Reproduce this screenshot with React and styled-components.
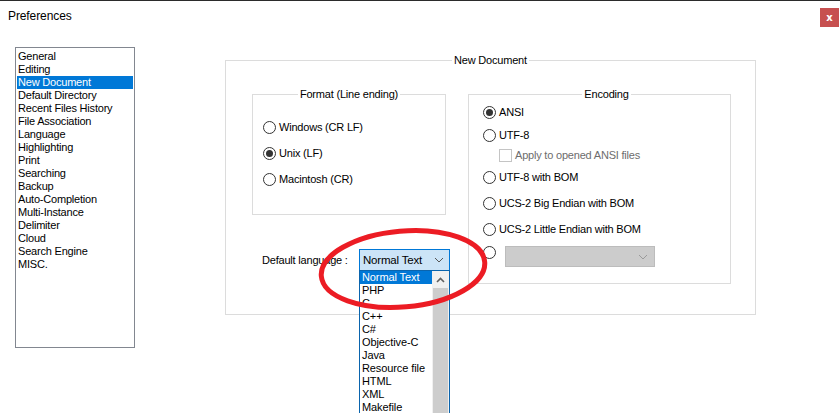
import React from 'react';
import styled, { createGlobalStyle } from 'styled-components';

const GlobalStyle = createGlobalStyle`
  html, body {
    margin: 0;
    padding: 0;
    background: #ffffff;
  }
  body {
    font-family: "Liberation Sans", Arial, sans-serif;
    font-size: 11px;
    color: #000;
  }
`;

const categories = [
  'General', 'Editing', 'New Document', 'Default Directory', 'Recent Files History',
  'File Association', 'Language', 'Highlighting', 'Print', 'Searching', 'Backup',
  'Auto-Completion', 'Multi-Instance', 'Delimiter', 'Cloud', 'Search Engine', 'MISC.'
];

const languages = [
  'Normal Text', 'PHP', 'C', 'C++', 'C#', 'Objective-C', 'Java', 'Resource file',
  'HTML', 'XML', 'Makefile'
];

export default function App() {
  return (
    <Page>
      <GlobalStyle />
      <TopLine />
      <TitleBar>
        <Title>Preferences</Title>
        <CloseButton>x</CloseButton>
      </TitleBar>
      <Main>
        <CategoryList>
          {categories.map(c => (
            <CategoryItem key={c} $selected={c === 'New Document'}>{c}</CategoryItem>
          ))}
        </CategoryList>
        <DocGroup>
          <Legend>New Document</Legend>
          <GroupRow>
            <LeftColumn>
              <FormatGroup>
                <Legend>Format (Line ending)</Legend>
                <FormatOptions>
                  <Option><Radio /><span>Windows (CR LF)</span></Option>
                  <Option><Radio $checked /><span>Unix (LF)</span></Option>
                  <Option><Radio /><span>Macintosh (CR)</span></Option>
                </FormatOptions>
              </FormatGroup>
              <LanguageRow>
                <LangLabel>Default language :</LangLabel>
                <ComboWrap>
                  <LangCombo>
                    <span>Normal Text</span>
                    <Chevron color="#555" />
                  </LangCombo>
                  <DropList>
                    <DropItems>
                      {languages.map(l => (
                        <DropItem key={l} $selected={l === 'Normal Text'}>{l}</DropItem>
                      ))}
                    </DropItems>
                    <ScrollBar>
                      <ScrollArrow>
                        <svg width="9" height="6" viewBox="0 0 9 6">
                          <path d="M1 5 L4.5 1.5 L8 5" fill="none" stroke="#606060" strokeWidth="1.6" />
                        </svg>
                      </ScrollArrow>
                      <ScrollThumb />
                    </ScrollBar>
                  </DropList>
                </ComboWrap>
              </LanguageRow>
            </LeftColumn>
            <EncodingGroup>
              <Legend>Encoding</Legend>
              <Option $mt={2}><Radio $checked /><span>ANSI</span></Option>
              <Option $mt={7}><Radio /><span>UTF-8</span></Option>
              <CheckRow $mt={4}><CheckBox /><span>Apply to opened ANSI files</span></CheckRow>
              <Option $mt={6}><Radio /><span>UTF-8 with BOM</span></Option>
              <Option $mt={10}><Radio /><span>UCS-2 Big Endian with BOM</span></Option>
              <Option $mt={10}><Radio /><span>UCS-2 Little Endian with BOM</span></Option>
              <ComboRow>
                <Radio />
                <DisabledCombo>
                  <Chevron color="#9a9a9a" />
                </DisabledCombo>
              </ComboRow>
            </EncodingGroup>
          </GroupRow>
        </DocGroup>
      </Main>
      <Annotation width="200" height="104" viewBox="0 0 200 104">
        <ellipse cx="93" cy="51" rx="82" ry="38" fill="none" stroke="#ec1c24" strokeWidth="5"
          transform="rotate(-5 93 51)" />
      </Annotation>
    </Page>
  );
}

function Chevron({ color }) {
  return (
    <svg width="10" height="6" viewBox="0 0 10 6">
      <path d="M1 1 L5 5 L9 1" fill="none" stroke={color} strokeWidth="1" />
    </svg>
  );
}

const Page = styled.div`
  position: relative;
  width: 840px;
  height: 413px;
  overflow: hidden;
  background: #fff;
`;

const TopLine = styled.div`
  height: 1px;
  background: #2b2b2b;
`;

const TitleBar = styled.div`
  height: 46px;
  display: flex;
  align-items: flex-start;
  justify-content: space-between;
  padding-left: 8px;
  box-sizing: border-box;
`;

const Title = styled.div`
  font-size: 12px;
  margin-top: 8px;
  line-height: 15px;
  letter-spacing: -0.1px;
`;

const CloseButton = styled.div`
  width: 19px;
  height: 19px;
  margin-top: 7px;
  margin-right: 1px;
  background: #c75050;
  color: #fff;
  font-family: "DejaVu Sans", sans-serif;
  font-weight: bold;
  font-size: 10px;
  display: flex;
  align-items: center;
  justify-content: center;
`;

const Main = styled.div`
  display: flex;
  align-items: flex-start;
  padding-left: 15px;
`;

const CategoryList = styled.div`
  width: 120px;
  height: 301px;
  box-sizing: border-box;
  border: 1px solid #828790;
  padding: 1.5px 1px 1px;
`;

const CategoryItem = styled.div`
  height: 13px;
  line-height: 13px;
  padding-left: 1px;
  letter-spacing: -0.2px;
  white-space: nowrap;
  background: ${p => (p.$selected ? '#0078d7' : 'transparent')};
  color: ${p => (p.$selected ? '#fff' : '#000')};
`;

const Legend = styled.div`
  display: table;
  margin: -8px auto 0;
  padding: 0 2px;
  background: #fff;
  line-height: 15px;
  font-size: 11px;
  letter-spacing: -0.2px;
`;

const DocGroup = styled.div`
  width: 531px;
  height: 255px;
  box-sizing: border-box;
  margin-left: 90px;
  margin-top: 13px;
  border: 1px solid #dcdcdc;
`;

const GroupRow = styled.div`
  display: flex;
  align-items: flex-start;
  gap: 22px;
  margin-top: 26px;
  padding-left: 26px;
`;

const LeftColumn = styled.div`
  width: 194px;
  display: flex;
  flex-direction: column;
`;

const FormatGroup = styled.div`
  width: 194px;
  height: 121px;
  box-sizing: border-box;
  border: 1px solid #dcdcdc;
`;

const FormatOptions = styled.div`
  display: flex;
  flex-direction: column;
  gap: 10px;
  padding-left: 10px;
  margin-top: 17px;
`;

const Option = styled.div`
  display: flex;
  align-items: center;
  gap: 3px;
  height: 16px;
  margin-top: ${p => p.$mt || 0}px;
  letter-spacing: -0.2px;
  white-space: nowrap;
`;

const Radio = styled.span`
  position: relative;
  width: 13px;
  height: 13px;
  box-sizing: border-box;
  border: 1px solid #333;
  border-radius: 50%;
  background: #fff;
  flex: none;
  &::after {
    content: '';
    display: ${p => (p.$checked ? 'block' : 'none')};
    position: absolute;
    left: 2px;
    top: 2px;
    width: 7px;
    height: 7px;
    border-radius: 50%;
    background: #333;
  }
`;

const CheckRow = styled.div`
  display: flex;
  align-items: center;
  gap: 3px;
  height: 16px;
  margin-top: ${p => p.$mt || 0}px;
  padding-left: 16px;
  color: #6d6d6d;
  letter-spacing: -0.2px;
  white-space: nowrap;
`;

const CheckBox = styled.span`
  width: 13px;
  height: 13px;
  box-sizing: border-box;
  border: 1px solid #c4c4c4;
  background: #fff;
  flex: none;
`;

const EncodingGroup = styled.div`
  width: 263px;
  height: 190px;
  box-sizing: border-box;
  border: 1px solid #dcdcdc;
  padding-left: 14px;
  display: flex;
  flex-direction: column;
`;

const ComboRow = styled.div`
  display: flex;
  align-items: flex-start;
  gap: 9px;
  margin-top: 9px;
`;

const DisabledCombo = styled.div`
  width: 150px;
  height: 21px;
  box-sizing: border-box;
  border: 1px solid #bcbcbc;
  background: #cccccc;
  display: flex;
  align-items: center;
  justify-content: flex-end;
  padding-right: 6px;
`;

const LanguageRow = styled.div`
  display: flex;
  align-items: center;
  margin-top: 34px;
  padding-left: 10px;
`;

const LangLabel = styled.span`
  width: 97px;
  flex: none;
  white-space: nowrap;
  letter-spacing: -0.2px;
`;

const ComboWrap = styled.div`
  position: relative;
`;

const LangCombo = styled.div`
  width: 91px;
  height: 22px;
  box-sizing: border-box;
  border: 1px solid #0078d7;
  background: #cce4f7;
  display: flex;
  align-items: center;
  justify-content: space-between;
  padding: 0 5px 0 3px;
  font-size: 11.5px;
  letter-spacing: -0.2px;
  white-space: nowrap;
`;

const DropList = styled.div`
  position: absolute;
  left: 0;
  top: 21px;
  width: 91px;
  height: 160px;
  box-sizing: border-box;
  border: 1px solid #0a64ad;
  background: #fff;
  display: flex;
  z-index: 2;
`;

const DropItems = styled.div`
  flex: 1;
  display: flex;
  flex-direction: column;
`;

const DropItem = styled.div`
  height: 13px;
  line-height: 13px;
  padding-left: 2px;
  font-size: 11px;
  letter-spacing: -0.1px;
  white-space: nowrap;
  background: ${p => (p.$selected ? '#0078d7' : 'transparent')};
  color: ${p => (p.$selected ? '#fff' : '#000')};
`;

const ScrollBar = styled.div`
  width: 17px;
  background: #f0f0f0;
  display: flex;
  flex-direction: column;
  align-items: center;
`;

const ScrollArrow = styled.div`
  height: 17px;
  width: 17px;
  display: flex;
  align-items: center;
  justify-content: center;
`;

const ScrollThumb = styled.div`
  width: 15px;
  flex: 1;
  background: #cdcdcd;
`;

const Annotation = styled.svg`
  position: absolute;
  left: 310px;
  top: 218px;
  pointer-events: none;
  z-index: 3;
`;
